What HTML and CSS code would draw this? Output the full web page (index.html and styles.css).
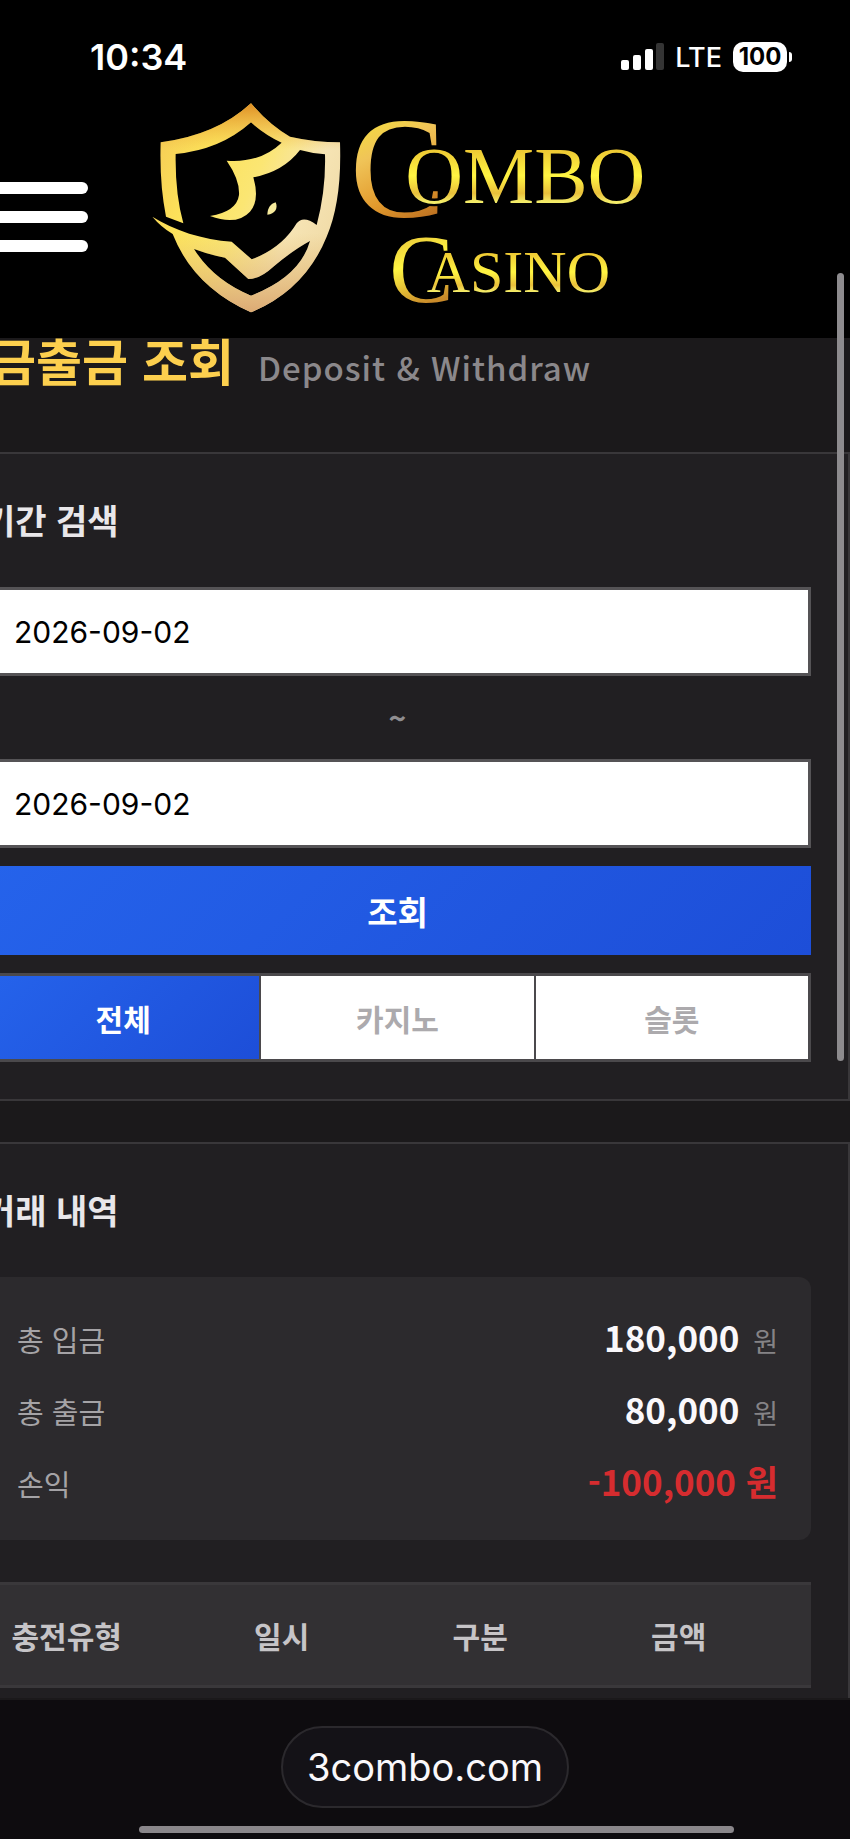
FILE: index.html
```html
<!DOCTYPE html>
<html lang="ko">
<head>
<meta charset="utf-8">
<meta name="viewport" content="width=device-width, initial-scale=1">
<title>Combo Casino</title>
<link rel="stylesheet" href="styles.css">
</head>
<body>
<header class="header">
  <div class="status">
    <time class="clock">10:34</time>
    <div class="indicators">
      <svg class="signal" viewBox="0 0 43 28" aria-hidden="true">
        <rect x="0" y="17" width="8" height="10" rx="2" fill="#fff"/>
        <rect x="12" y="12" width="8" height="15" rx="2" fill="#fff"/>
        <rect x="24" y="6" width="8" height="21" rx="2" fill="#fff"/>
        <rect x="35" y="0" width="8" height="27" rx="2" fill="#343434"/>
      </svg>
      <span class="network">LTE</span>
      <span class="battery">100</span>
    </div>
  </div>
  <div class="brandbar">
    <button class="menu" type="button" aria-label="메뉴"><span></span><span></span><span></span></button>
    <a class="logo" href="#" aria-label="Combo Casino">
      <svg viewBox="0 0 1560 705">
        <defs>
          <linearGradient id="shield" x1="0" y1="0.2" x2="1" y2="0.7">
            <stop offset="0" stop-color="#f5cc55"/>
            <stop offset="0.25" stop-color="#fce25a"/>
            <stop offset="0.5" stop-color="#fbe673"/>
            <stop offset="0.75" stop-color="#f6e4b4"/>
            <stop offset="1" stop-color="#efd9a4"/>
          </linearGradient>
          <linearGradient id="peak" x1="0" y1="0" x2="0" y2="1">
            <stop offset="0" stop-color="#de8e24"/>
            <stop offset="0.22" stop-color="#eeb040" stop-opacity="0"/>
            <stop offset="0.62" stop-color="#e4bd70" stop-opacity="0"/>
            <stop offset="1" stop-color="#dcaa74"/>
          </linearGradient>
          <linearGradient id="cap" x1="0" y1="0" x2="0.3" y2="1">
            <stop offset="0.15" stop-color="#f6e437"/>
            <stop offset="0.45" stop-color="#f0c458"/>
            <stop offset="0.75" stop-color="#e29a2d"/>
            <stop offset="1" stop-color="#b96d20"/>
          </linearGradient>
          <linearGradient id="cap2" x1="0" y1="0" x2="0.2" y2="1">
            <stop offset="0.2" stop-color="#e8c53a"/>
            <stop offset="0.5" stop-color="#fff542"/>
            <stop offset="0.9" stop-color="#c98a2a"/>
          </linearGradient>
          <linearGradient id="word" x1="0" y1="0" x2="0" y2="1">
            <stop offset="0.2" stop-color="#edc733"/>
            <stop offset="0.5" stop-color="#fff542"/>
            <stop offset="0.7" stop-color="#e9c03b"/>
            <stop offset="0.8" stop-color="#f4ed69"/>
          </linearGradient>
          <path id="crest" d="M62 157Q230 135 333 40Q388 105 450 140Q525 157 600 157C604 280 590 370 560 440Q495 600 333 667Q160 590 98 432Q62 410 37 380C100 420 190 450 275 455L335 508Q425 475 470 400Q490 375 530 405Q558 300 555 193Q515 190 480 180Q430 245 340 262Q360 330 330 365Q290 408 210 378Q290 365 297 315Q300 270 260 212Q360 220 425 158Q375 135 333 97Q240 180 107 192Q105 310 130 400L78 380Q58 280 62 157ZM162 477Q220 570 333 617Q480 560 510 453Q460 480 400 530Q360 567 325 567L255 503Q210 495 162 477Z" fill-rule="evenodd"/>
        </defs>
        <use href="#crest" fill="url(#shield)"/>
        <use href="#crest" fill="url(#peak)"/>
        <path d="M382 374C383 352 392 342 407 337C415 355 405 373 382 374Z" fill="#f6ea9c"/>
        <g class="wordmark">
          <text x="630" y="380" font-size="430" fill="url(#cap)">C</text>
          <text class="inset" x="796" y="338" font-size="240" fill="url(#word)">OMBO</text>
          <text x="748" y="636" font-size="290" fill="url(#cap2)">C</text>
          <text class="inset" x="860" y="606" font-size="180" fill="url(#word)">ASINO</text>
        </g>
      </svg>
    </a>
  </div>
</header>

<main class="main">
  <div class="content">
    <div class="title">
      <h1>금출금 조회</h1>
      <span>Deposit &amp; Withdraw</span>
    </div>

    <section class="panel">
      <h2>기간 검색</h2>
      <form class="search">
        <input class="date" type="text" value="2026-09-02" aria-label="시작일">
        <span class="tilde">~</span>
        <input class="date" type="text" value="2026-09-02" aria-label="종료일">
        <button class="submit" type="button">조회</button>
        <div class="tabs">
          <button class="tab active" type="button">전체</button>
          <button class="tab" type="button">카지노</button>
          <button class="tab" type="button">슬롯</button>
        </div>
      </form>
    </section>

    <section class="panel">
      <h2>거래 내역</h2>
      <dl class="summary">
        <div><dt>총 입금</dt><dd>180,000 <small>원</small></dd></div>
        <div><dt>총 출금</dt><dd>80,000 <small>원</small></dd></div>
        <div><dt>손익</dt><dd class="loss">-100,000 원</dd></div>
      </dl>
      <table class="history">
        <thead>
          <tr><th class="kind">충전유형</th><th class="when">일시</th><th class="type">구분</th><th>금액</th></tr>
        </thead>
      </table>
    </section>
  </div>
</main>

<footer class="toolbar">
  <a class="address" href="#">3combo.com</a>
  <div class="home"></div>
</footer>
<div class="scrollbar"></div>
</body>
</html>
```

FILE: styles.css
```css
* { box-sizing: border-box; }

body {
  margin: 0;
  min-height: 100vh;
  display: flex;
  flex-direction: column;
  position: relative;
  overflow-x: hidden;
  background: #1b191b;
  color: #e9e7ea;
  font-family: "Noto Sans CJK KR", sans-serif;
}

h1, h2, dl, dd { margin: 0; }
button, input { font-family: inherit; border-radius: 0; margin: 0; }
a { color: inherit; text-decoration: none; }

.header { background: #000; padding-bottom: 13px; }

.status {
  height: 90px;
  padding: 24px 58px 0 90px;
  display: flex;
  justify-content: space-between;
  align-items: center;
  color: #fff;
  font-family: Inter, sans-serif;
}
.clock { font-size: 36px; font-weight: 600; }
.indicators { display: flex; align-items: center; gap: 11px; }
.signal { width: 43px; height: 28px; }
.network { font-size: 27px; font-weight: 500; }
.battery {
  position: relative;
  width: 54px;
  height: 30px;
  margin-right: 5px;
  border-radius: 10px;
  background: #fff;
  color: #000;
  font-size: 24px;
  font-weight: 700;
  line-height: 30px;
  text-align: center;
}
.battery::after {
  content: "";
  position: absolute;
  left: 56px;
  top: 10px;
  width: 3px;
  height: 10px;
  border-radius: 0 3px 3px 0;
  background: #fff;
}

.brandbar { display: flex; align-items: center; }
.menu {
  width: 88px;
  padding: 19px 0 0;
  border: 0;
  background: none;
  display: flex;
  flex-direction: column;
  gap: 17px;
}
.menu span { height: 12px; border-radius: 0 6px 6px 0; background: #fff; }
.logo { margin-left: 52px; width: 520px; height: 235px; }
.logo svg { display: block; width: 100%; height: 100%; }
.wordmark { font-family: "Liberation Serif", serif; }
.inset { stroke: #000; stroke-width: 14px; paint-order: stroke; }

.main { flex: 1; overflow: hidden; }
.content { margin-left: -55px; }

.title {
  height: 114px;
  padding: 0 45px;
  display: flex;
  align-items: baseline;
  gap: 24px;
  white-space: nowrap;
}
.title h1 { color: #fccf4e; font-size: 50px; font-weight: 700; line-height: 42px; }
.title span { color: #8b888b; font-size: 33px; font-weight: 500; letter-spacing: 1px; }

.panel {
  padding: 37px;
  border: 2px solid #39373a;
  background: #211f22;
}
.panel + .panel { margin-top: 41px; padding-bottom: 10px; border-bottom: 0; }
.panel h2 { margin-bottom: 38px; font-size: 34px; font-weight: 700; line-height: 58px; }

.search { display: flex; flex-direction: column; gap: 18px; }
.date {
  width: 100%;
  height: 89px;
  padding: 0 27px;
  border: 3px solid #555356;
  background: #fff;
  color: #000;
  font-family: Inter, sans-serif;
  font-size: 30px;
}
.tilde { color: #8f8d90; font-size: 30px; font-weight: 700; line-height: 47px; text-align: center; }
.submit {
  height: 89px;
  border: 0;
  background: linear-gradient(135deg, #2563eb, #1d4ed8);
  color: #fff;
  font-size: 33px;
  font-weight: 700;
}
.tabs {
  height: 89px;
  display: grid;
  grid-template-columns: repeat(3, 1fr);
  gap: 2px;
  border: 3px solid #4b494c;
  background: #4b494c;
}
.tab { border: 0; background: #fff; color: #acaaad; font-size: 30px; font-weight: 700; }
.tab.active { background: linear-gradient(135deg, #2563eb, #1d4ed8); color: #fff; }

.summary {
  padding: 37px 33px 34px;
  border-radius: 12px;
  background: #2c2a2d;
  display: flex;
  flex-direction: column;
  gap: 24px;
}
.summary div { display: flex; justify-content: space-between; align-items: baseline; line-height: 46px; }
.summary dt { color: #a5a3a6; font-size: 29px; }
.summary dd { color: #faf8fb; font-size: 35px; font-weight: 700; }
.summary small { margin-left: 4px; color: #858386; font-size: 27px; font-weight: 400; line-height: 27px; }
.summary .loss { color: #d62c2f; }

.history {
  width: 100%;
  margin-top: 42px;
  border-spacing: 0;
  table-layout: fixed;
  background: #323033;
}
.history th {
  height: 106px;
  padding: 0;
  border: solid #3a383b;
  border-width: 3px 0;
  color: #c6c4c7;
  font-size: 30px;
  font-weight: 700;
}
.kind { width: 20%; }
.when { width: 32%; }
.type { width: 16%; }

.toolbar {
  height: 139px;
  padding: 26px 0 6px;
  display: flex;
  flex-direction: column;
  align-items: center;
  justify-content: space-between;
  background: #0e0c0f;
}
.address {
  padding: 0 24px;
  border: 2px solid #2b292d;
  border-radius: 41px;
  background: #141217;
  color: #faf8fb;
  font-family: Inter, sans-serif;
  font-size: 38px;
  line-height: 78px;
}
.home { width: 70%; height: 7px; margin-left: 22px; border-radius: 4px; background: #8a878b; }

.scrollbar {
  position: absolute;
  top: 273px;
  right: 6px;
  width: 7px;
  height: 788px;
  border-radius: 4px;
  background: #8d8b8e;
}
```
